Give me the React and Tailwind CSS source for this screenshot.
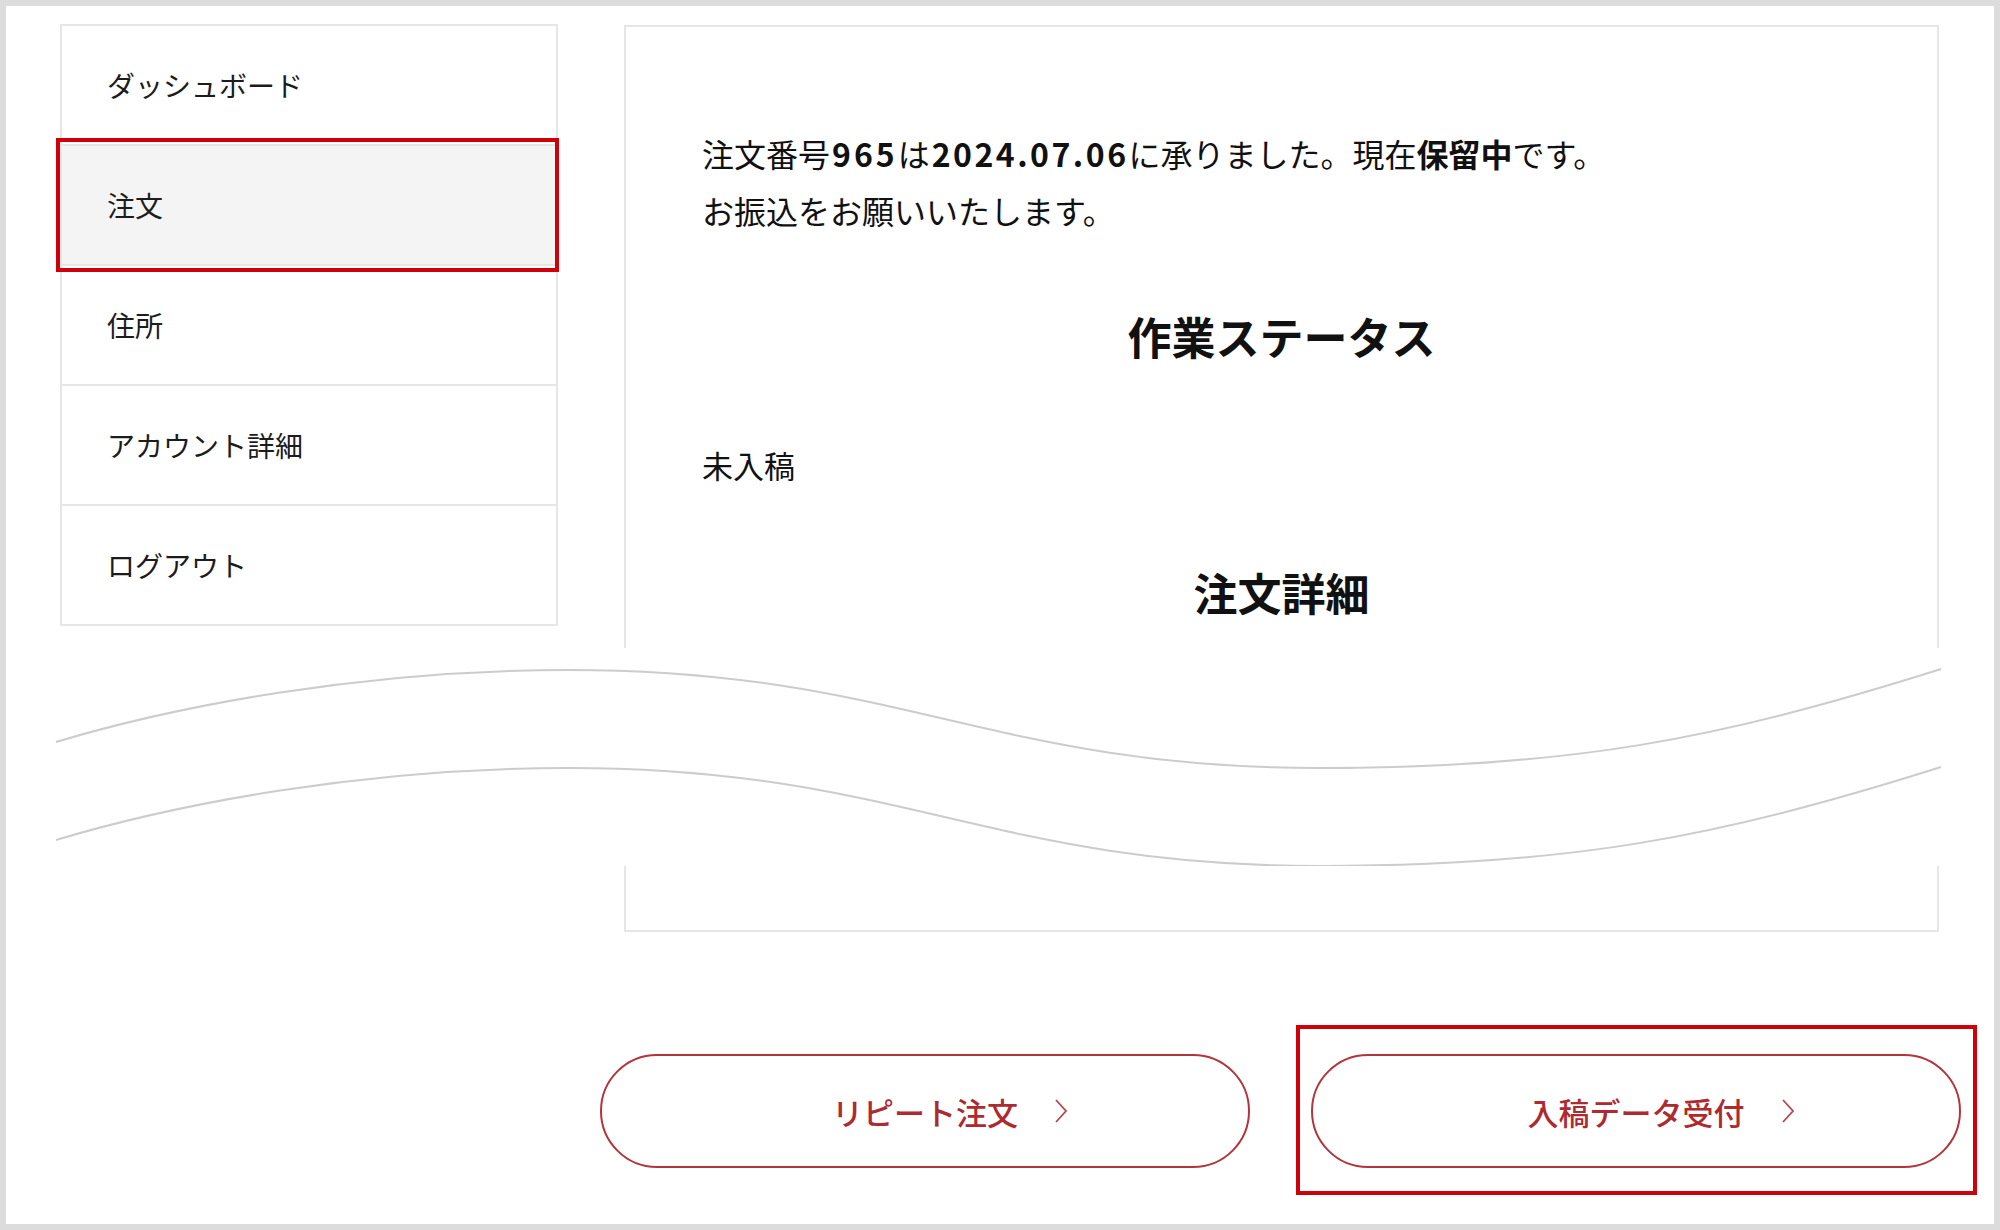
import React from 'react';

const menu = ['ダッシュボード', '注文', '住所', 'アカウント詳細', 'ログアウト'];

function Chevron() {
  return (
    <svg
      className="absolute left-full ml-[36px] top-1/2 -translate-y-1/2"
      width="14"
      height="26"
      viewBox="0 0 14 26"
      fill="none"
    >
      <polyline points="2,2 12,13 2,24" stroke="#b8454a" strokeWidth="1.8" />
    </svg>
  );
}

function PillButton({ label }) {
  return (
    <button className="w-[650px] h-[114px] rounded-full border-2 border-[#b3353b] bg-white flex items-center justify-center">
      <span className="relative text-[31px] leading-none font-medium text-[#ad2a31]">
        {label}
        <Chevron />
      </span>
    </button>
  );
}

// 波線（省略部分）
function Wave() {
  const upper = 'M50,94 C170,58 357,22 562,22 C894,22 983,120 1314,120 C1562,120 1710,92 1935,21';
  const lower = 'M50,192 C170,156 357,120 562,120 C894,120 983,218 1314,218 C1562,218 1710,190 1935,119';
  return (
    <svg className="absolute left-0 top-[642px]" width="1988" height="218" viewBox="0 0 1988 218">
      <rect x="0" y="0" width="1988" height="218" fill="#fff" />
      <path d={upper} stroke="#cccccc" strokeWidth="2" fill="none" />
      <path d={lower} stroke="#cccccc" strokeWidth="2" fill="none" />
    </svg>
  );
}

export default function App() {
  return (
    <div className="relative w-[2000px] h-[1230px] border-[6px] border-[#dcdcdc] bg-white overflow-hidden font-['Noto_Sans_CJK_JP',sans-serif] text-[#111]">
      <div className="flex items-start pl-[54px] pt-[18px]">
        <nav className="w-[498px] border-2 border-[#e6e6e6]">
          {menu.map((item, i) => (
            <div
              key={item}
              className={
                (i === 0 ? 'h-[118px] ' : 'h-[120px] border-t-2 border-[#e6e6e6] ') +
                (i === 1 ? 'bg-[#f4f4f4] ' : 'bg-white ') +
                'flex items-center pl-[45px] text-[28px] text-[#1c1c1c]'
              }
            >
              {item}
            </div>
          ))}
        </nav>

        <div className="ml-[66px] mt-[1px] w-[1315px] h-[907px] border-2 border-[#e6e6e6] px-[76px] pt-[98px]">
          <p className="text-[32px] leading-[57px]">
            注文番号<b className="font-bold tracking-[3px] pl-[2px]">965</b>は
            <b className="font-bold tracking-[2.5px] pl-[2px]">2024.07.06</b>に承りました。現在
            <b className="font-bold">保留中</b>です。
          </p>
          <p className="text-[32px] leading-[57px]">お振込をお願いいたします。</p>
          <h2 className="mt-[67px] text-center text-[44px] leading-[60px] font-bold">作業ステータス</h2>
          <p className="mt-[70px] text-[31px] leading-[57px]">未入稿</p>
          <h2 className="mt-[69px] text-center text-[44px] leading-[60px] font-bold">注文詳細</h2>
        </div>
      </div>

      <Wave />

      <div className="flex pl-[594px] mt-[122px] gap-[61px]">
        <PillButton label="リピート注文" />
        <PillButton label="入稿データ受付" />
      </div>

      {/* 注目枠 */}
      <div className="absolute left-[50px] top-[132px] w-[503px] h-[134px] border-4 border-[#d0000b]" />
      <div className="absolute left-[1290px] top-[1019px] w-[681px] h-[170px] border-4 border-[#d0000b]" />
    </div>
  );
}
